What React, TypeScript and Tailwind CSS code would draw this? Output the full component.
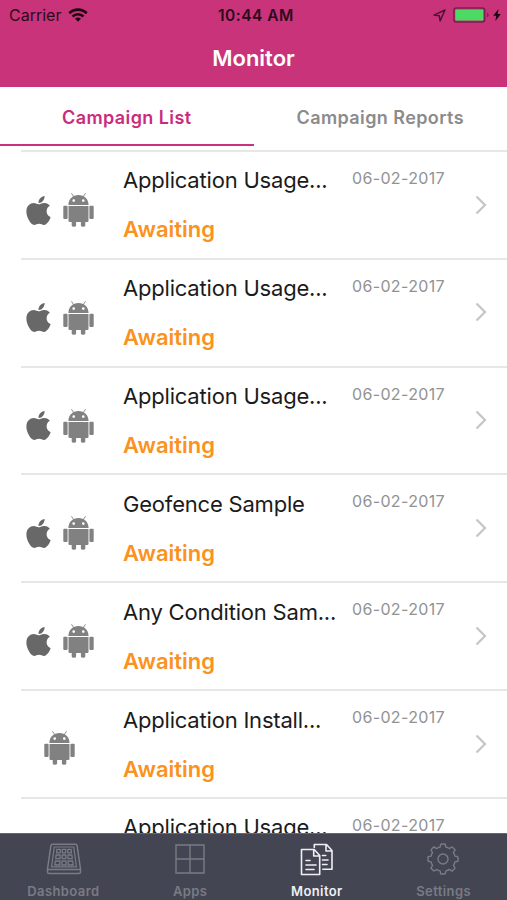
import { FaApple } from 'react-icons/fa';
import clsx from 'clsx';

type Campaign = {
    name: string;
    date: string;
    ios: boolean;
};

const campaigns: Campaign[] = [
    { name: 'Application Usage...', date: '06-02-2017', ios: true },
    { name: 'Application Usage...', date: '06-02-2017', ios: true },
    { name: 'Application Usage...', date: '06-02-2017', ios: true },
    { name: 'Geofence Sample', date: '06-02-2017', ios: true },
    { name: 'Any Condition Sam...', date: '06-02-2017', ios: true },
    { name: 'Application Install...', date: '06-02-2017', ios: false },
    { name: 'Application Usage...', date: '06-02-2017', ios: true },
];

function AndroidIcon() {
    return (
        <svg width="31" height="34" viewBox="0 0 31 34" fill="#818181">
            <path d="M10.7 3.6 8.7.6M20.3 3.6l2-3" stroke="#818181" strokeWidth="0.9" strokeLinecap="round" />
            <path fillRule="evenodd" d="M5.400 11.900C5.600 6 9.800 2.100 15.500 2.100S25.400 6 25.600 11.900ZM10.700 6.200a1.350 1.350 0 1 0 0 2.700a1.350 1.350 0 0 0 0-2.700ZM20.300 6.200a1.350 1.350 0 1 0 0 2.700a1.350 1.350 0 0 0 0-2.700Z" />
            <rect x="0.300" y="12.700" width="4.300" height="13.300" rx="1.100" />
            <rect x="26.400" y="12.700" width="4.300" height="13.300" rx="1.100" />
            <path d="M5.500 13h20v14.700q0 1.200-1.200 1.200H22.300V32.500q0 1.300-2.200 1.300T17.900 32.500v-3.600h-4.800V32.500q0 1.300-2.200 1.300T8.700 32.500v-3.600H6.700q-1.200 0-1.200-1.200Z" />
        </svg>
    );
}

function StatusBar() {
    return (
        <div className="grid h-[30px] grid-cols-3 items-center pl-[9px] pr-[6px] text-[#2b0a1b]">
            <div className="flex items-center gap-[7px]">
                <span className="text-[16px]">Carrier</span>
                <svg width="20" height="14" viewBox="0 0 20 14" fill="none" stroke="#1d0612" strokeWidth="2.600">
                    <path d="M1.300 5.200C6.200.4 13.800.4 18.700 5.200" />
                    <path d="M4.500 8.500c3.200-3 7.800-3 11 0" />
                    <path d="M7 10.600q3-2.300 6 0L10 13.800Z" fill="#1d0612" stroke="none" />
                </svg>
            </div>
            <span className="ml-[2px] whitespace-nowrap pt-px text-center text-[15.500px] font-semibold tracking-[0.500px]">10:44 AM</span>
            <div className="flex items-center justify-end">
                <svg width="13" height="13" viewBox="0 0 13 13" fill="none" stroke="#4b1531" strokeWidth="1.500" strokeLinejoin="round">
                    <path d="M12 1 1 6.100l5.300.6.800 5.300Z" />
                </svg>
                <svg className="ml-[7px]" width="40" height="16" viewBox="0 0 40 16">
                    <rect x="0.900" y="0.900" width="30.800" height="14.200" rx="2.500" fill="none" stroke="#792050" strokeWidth="1.500" />
                    <rect x="2.300" y="2.500" width="28" height="11" rx="1" fill="#4cd964" />
                    <path d="M34 5.500q3.500 2.500 0 5Z" fill="#792050" />
                </svg>
                <svg width="8" height="12" viewBox="0 0 8 12" fill="#1d0612">
                    <path d="M5.500 0 .2 6.700h3L2.400 12 7.800 5H4.700Z" />
                </svg>
            </div>
        </div>
    );
}

function CampaignRow({ name, date, ios }: Campaign) {
    return (
        <div className="ml-[21px] flex h-[107.830px] shrink-0 border-t-2 border-[#e6e7e7]">
            <div className={clsx('flex h-[34px] w-[102px] shrink-0 items-center', ios ? 'mt-[41px] pl-[5px]' : 'mt-[40px] pl-[23px]')}>
                {ios && <FaApple className="mr-[12px] h-[33px] w-[25px] shrink-0 text-[#686868]" />}
                <AndroidIcon />
            </div>
            <div className="w-[229px] shrink-0 whitespace-nowrap">
                <div className="mt-[12.400px] text-[22px] leading-8 tracking-[-0.200px] text-[#1b1b1b]">{name}</div>
                <div className="mt-[17px] text-[22px] font-semibold leading-8 text-[#fb9220]">Awaiting</div>
            </div>
            <div className="mt-[14px] w-[123px] shrink-0 text-[16px] leading-6 tracking-[0.350px] text-[#929292]">{date}</div>
            <svg className="mt-[42.500px] shrink-0" width="13" height="20" viewBox="0 0 13 20" fill="none" stroke="#c5c5c7" strokeWidth="2.200">
                <path d="m1.500 1.500 8.500 8.500-8.500 8.500" />
            </svg>
        </div>
    );
}

function DashboardIcon() {
    return (
        <svg className="ml-[2px]" width="36" height="32" viewBox="0 0 36 32" fill="none" stroke="currentColor" strokeWidth="1.500" strokeLinejoin="round">
            <path d="M6.500 1.200h23q1.300 0 1.600 1.500L34.500 26v3q0 1.500-1.500 1.500H3Q1.500 30.500 1.500 29v-3L4.900 2.700Q5.200 1.200 6.500 1.200ZM2 26.500h32" />
            <path strokeWidth="1.200" d="M8.300 4h19.400l2.800 19.800h-25Z" />
            <path strokeWidth="1.300" d="M10.900 6.300h3.300v3.500h-3.600ZM16.300 6.300h3.400v3.500h-3.400ZM21.800 6.300h3.300l.3 3.500h-3.600ZM10.100 12h4v3.700H9.700ZM16.200 12h3.600v3.700h-3.600ZM21.900 12h4l.4 3.700h-4.400ZM9.300 18h4.600v4H8.800ZM15.900 18h4.200v4h-4.200ZM22.100 18h4.600l.5 4h-5.100Z" />
        </svg>
    );
}

function AppsIcon() {
    return (
        <svg width="30" height="30" viewBox="0 0 30 30" fill="none" stroke="currentColor" strokeWidth="1.400">
            <path d="M1 1h28v28H1ZM15 1v28M1 15h28" />
        </svg>
    );
}

function MonitorIcon() {
    return (
        <svg width="34" height="33" viewBox="0 0 34 33" fill="none" stroke="currentColor" strokeWidth="1.600" strokeLinejoin="round" strokeLinecap="round">
            <path d="M1.500 6.500h12.700l5.500 6v19H1.500ZM13.700 6.500V13h6" />
            <path d="M14.300 4.500V1.500h12.200l5.500 6v18.800h-9.200M26 1.500V8h6" />
            <path d="M6 17.500h4M6 22h10M6 26.500h8M22.500 12.500h3.200M22.500 17h5.500M22.500 21.500h4.500" />
        </svg>
    );
}

function SettingsIcon() {
    return (
        <svg className="mr-[2px]" width="32" height="32" viewBox="-16 -16 32 32" fill="none" stroke="currentColor" strokeWidth="1.400" strokeLinejoin="round">
            <circle r="5" />
            {[0, 45, 90, 135, 180, 225, 270, 315].map((angle) => (
                <path key={angle} transform={`rotate(${angle})`} d="M-2.200-15H2.200L2.900-11.900Q4.700-11.500 6.360-10.470L9.050-12.160" />
            ))}
        </svg>
    );
}

const tabs = [
    { label: 'Dashboard', Icon: DashboardIcon, active: false },
    { label: 'Apps', Icon: AppsIcon, active: false },
    { label: 'Monitor', Icon: MonitorIcon, active: true },
    { label: 'Settings', Icon: SettingsIcon, active: false },
];

export default function App() {
    return (
        <div className="flex h-[900px] w-[507px] flex-col overflow-hidden bg-white font-['Inter',sans-serif]">
            <header className="h-[87px] shrink-0 bg-[#c93379]">
                <StatusBar />
                <h1 className="mt-[12px] text-center text-[22px] font-semibold leading-8 text-white">Monitor</h1>
            </header>

            {/* Campaign tabs */}
            <nav className="grid h-[63px] shrink-0 grid-cols-2 text-center text-[18px] font-semibold tracking-[0.400px]">
                <div className="h-[59px] border-b-2 border-[#c9337e] pt-[17px] text-[#cb2b7e]">Campaign List</div>
                <div className="pt-[17px] text-[#8b8b8b]">Campaign Reports</div>
            </nav>

            <main className="flex min-h-0 flex-1 flex-col overflow-hidden">
                {campaigns.map((campaign, i) => (
                    <CampaignRow key={i} {...campaign} />
                ))}
            </main>

            <footer className="grid h-[67px] shrink-0 grid-cols-4 border-t border-[#656873] bg-[#434652]">
                {tabs.map(({ label, Icon, active }) => (
                    <div key={label} className={clsx('flex flex-col items-center', active ? 'text-[#eeeff3]' : 'text-[#797b85]')}>
                        <div className="flex h-[50px] items-center">
                            <Icon />
                        </div>
                        <span className="-mt-px text-[13px] font-semibold leading-4 tracking-[0.400px]">{label}</span>
                    </div>
                ))}
            </footer>
        </div>
    );
}
